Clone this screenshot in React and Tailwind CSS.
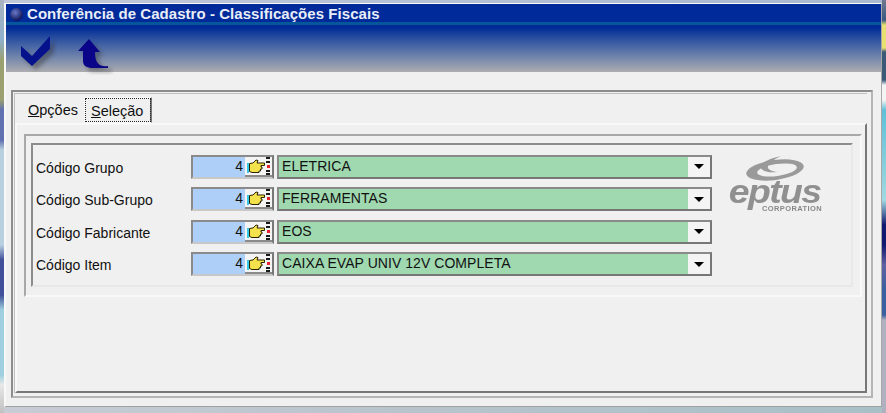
const rows = [
  { label: 'Código Grupo', value: 'ELETRICA' },
  { label: 'Código Sub-Grupo', value: 'FERRAMENTAS' },
  { label: 'Código Fabricante', value: 'EOS' },
  { label: 'Código Item', value: 'CAIXA EVAP UNIV 12V COMPLETA' },
]

function HandIcon() {
  return (
    <svg width="27" height="22" viewBox="0 0 27 22">
      <path d="M2 8h2v10H2z" fill="#35c8e8" />
      <path d="M4.5 8.5L8 8l3-3 2 .5-1 2.5h7.5v2.5H16v1.5h1v2h-1.5v2H14v1.500H7l-2.500-1z" fill="#f4e24c" stroke="#2b2400" strokeWidth="1" />
      <path d="M21 2h4v2h-4zM21 6h4v2h-4zM21 15h4v2h-4zM21 18h4v2h-4z" fill="#1a1a1a" />
      <path d="M22 10h3v3h-3z" fill="#e8202a" />
    </svg>
  )
}

function LookupRow({ label, value }) {
  return (
    <div className="flex items-center h-[23px]">
      <span className="w-[155px] pt-[3px] text-[14px] text-[#111]">{label}</span>
      <div className="flex w-[83px] h-[24px] border-2 border-t-[#8a8a8a] border-l-[#8a8a8a] border-r-[#777] border-b-[#c8c8c8] bg-[#aed0f8]">
        <span className="flex-1 text-right pr-[2px] text-[14px] leading-[19px] text-[#111]">4</span>
        <span className="flex items-center justify-center w-[27px] bg-[#f4f4f4] border-b-2 border-[#8a8a8a]">
          <HandIcon />
        </span>
      </div>
      <div className="flex ml-[3px] w-[435px] h-[24px] border-2 border-t-[#8a8a8a] border-l-[#8a8a8a] border-r-[#777] border-b-[#777] bg-[#a0d8b0]">
        <span className="flex-1 pl-[3px] text-[14px] leading-[19px] tracking-[0.05px] text-[#111]">{value}</span>
        <span className="flex items-center justify-center w-[22px] bg-[#f4f4f4]">
          <span className="w-0 h-0 border-x-[5px] border-x-transparent border-t-[5px] border-t-black" />
        </span>
      </div>
    </div>
  )
}

function Logo() {
  return (
    <div className="flex flex-col items-center w-[94px] ml-[16px] text-[#909090]">
      <svg width="60" height="29" viewBox="0 0 60 29">
        <ellipse cx="30" cy="15" rx="29" ry="10" transform="rotate(-8 30 15)" fill="#9a9a9a" />
        <ellipse cx="32" cy="15" rx="20" ry="6" transform="rotate(-8 32 15)" fill="#f0f0f0" />
        <path d="M36 1C26 3 14 8 16 13c1 3 8 5 16 4-6-1-10-3-9-6 1-3 6-7 13-10z" fill="#9a9a9a" />
      </svg>
      <span className="-mt-[3px] h-[22px] font-bold italic text-[34px] leading-[20px] tracking-[-1.5px] scale-x-110">eptus</span>
      <span className="self-end mt-[2px] font-bold text-[7.5px] leading-[7px] tracking-[0.4px] text-[#888]">CORPORATION</span>
    </div>
  )
}

export default function App() {
  return (
    <div className="flex w-[886px] h-[413px] overflow-hidden blur-[0.3px] font-['Liberation_Sans',sans-serif]">
      <div className="w-[4px] bg-[linear-gradient(to_bottom,#aab4c0_0,#8fb0cc_40px,#9aa070_60px,#9aa070_100px,#6070b0_110px,#6070b0_140px,#b8d0e0_150px,#b8d0e0_245px,#40509a_260px,#40509a_295px,#a0d0e0_310px,#a0d0e0_375px,#e8e8e8_385px,#c0c0c0_413px)]" />
      <div className="flex flex-col flex-1">
        <div className="h-[3px] bg-[linear-gradient(to_right,#c0c8d8,#a8b8d0)]" />

        <div className="flex flex-col h-[404px] border border-l-2 border-[#f8f8f8] border-r-[#a8a8a8] border-b-[#a0a0a0] bg-[#f0f0f0]">
          {/* header */}
          <div className="h-[68px] bg-gradient-to-b from-[#012a96] from-[35%] to-[#adadb0]">
            <div className="flex items-center h-[21px] pl-[4px] pt-[3px] border-b-[3px] border-[#05579c] bg-[#00299a]">
              <span className="w-[13px] h-[13px] rounded-full bg-[radial-gradient(circle_at_40%_35%,#6a78c8,#10185c_70%)]" />
              <span className="ml-[4px] text-[15px] tracking-[0.05px] font-bold text-[#e8eef8] whitespace-nowrap">Conferência de Cadastro - Classificações Fiscais</span>
            </div>
            <div className="flex items-start pl-[15px] pt-[11px] gap-[21px]">
              <svg width="36" height="36" viewBox="0 0 36 36">
                <path d="M4 14l11 10L33 4v13L15 34 4 24z" fill="#333" opacity="0.45" className="blur-[2px]" />
                <path d="M0 10l11 10L29 0v13L11 30 0 20z" fill="#05128c" />
              </svg>
              <svg width="36" height="36" viewBox="0 0 36 36" className="mt-[3px]">
                <path d="M15 4L4 16h5v12c0 5 5 5 11 5h14v-3c-8 0-13-2-13-14h5z" fill="#333" opacity="0.4" className="blur-[2px]" />
                <path d="M11 0L0 12h5v10c0 5 4 7 10 7h15v-2c-8 1-13-2-13-14h5z" fill="#0a0488" />
              </svg>
            </div>
          </div>

          {/* content */}
          <div className="flex-1 pl-[5px] pr-[8px] pt-[18px] pb-[8px]">
            <div className="h-full pt-[1px] pl-[1px] pr-[4px] pb-[3px] border-2 border-[#8c8c8c] border-r-[#b5b5b5] border-b-[#b5b5b5]">
              <div className="flex flex-col h-full border-l border-t border-[#c0c0c0]">
                <div className="flex items-end h-[29px] pl-[13px] text-[14.5px] text-[#111]">
                  <span className="mb-[1px] mr-[6px]"><u>O</u>pções</span>
                  <span className="w-[68px] h-[26px] pt-[2px] pl-[5px] leading-[20px] border-2 border-[#f8f8f8] border-r-[#777] bg-[#f0f0f0] outline-1 outline-dotted -outline-offset-2 outline-[#222]"><u>S</u>eleção</span>
                </div>
                <div className="flex-1 border-2 border-t-[#f8f8f8] border-l-[#f8f8f8] border-r-[#777] border-b-[#777] pl-[7px] pr-[3px] pt-[9px]">
                  <div className="h-[163px] pt-[7px] pl-[5px] pr-[7px] border-2 border-[#f8f8f8] border-t-[#a8a8a8] border-l-[#a8a8a8]">
                    <div className="flex h-[144px] pl-[3px] pt-[10px] border-2 border-t-[#8c8c8c] border-l-[#8c8c8c] border-r-[#e8e8e8] border-b-[#e8e8e8]">
                      <div className="flex flex-col gap-[9.67px]">
                        {rows.map(row => <LookupRow key={row.label} {...row} />)}
                      </div>
                      <Logo />
                    </div>
                  </div>
                </div>
              </div>
            </div>
          </div>
        </div>

        <div className="flex-1 bg-[linear-gradient(to_right,#c8ccd4,#b8c4cc_45%,#a8c0c8)]" />
      </div>
      <div className="w-[4px] bg-[linear-gradient(to_bottom,#707890_0,#3a5a80_20px,#e8e070_25px,#e8e070_48px,#3a5a78_52px,#3a5a78_80px,#f4f4f4_85px,#f4f4f4_100px,#60c0d8_110px,#a0d8e0_200px,#101870_225px,#101870_245px,#6060a0_265px,#3a60a0_290px,#3a60a0_315px,#b0b0c0_320px,#b0b0c0_413px)]" />
    </div>
  )
}
